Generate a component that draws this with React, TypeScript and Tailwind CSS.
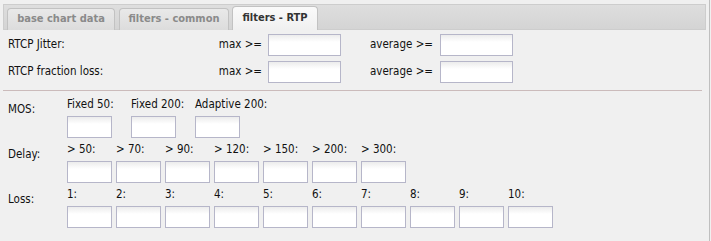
import React from "react";

const font = { fontFamily: '"DejaVu Sans Condensed", "DejaVu Sans", Verdana, sans-serif' };

function Input({ w }: { w: string }) {
  return (
    <div
      className={`${w} h-[22px] border border-[#b6b6c9] bg-[linear-gradient(#ececec,#ffffff_7px)]`}
    />
  );
}

function Section({
  label,
  items,
  gap,
}: {
  label: string;
  items: string[];
  gap: string;
}) {
  return (
    <div className="flex">
      <div className="w-[59px] pt-[5px] leading-[14px]">{label}</div>
      <div className={`flex ${gap}`}>
        {items.map((it) => (
          <div key={it} className="flex flex-col w-[45px]">
            <div className="leading-[14px] mb-[5px] whitespace-nowrap">{it}</div>
            <Input w="w-[45px]" />
          </div>
        ))}
      </div>
    </div>
  );
}

export default function App() {
  return (
    <div
      className="w-[711px] h-[241px] bg-[#f0f0f0] overflow-hidden text-[11.5px] text-[#111]"
      style={font}
    >
      <div className="w-[710px] h-full border-r border-[#bfbfbf]">
        <div className="pt-[4px] pl-[3px] pr-[3px]">
          <div className="h-[26px] border-t border-l border-r border-b border-[#cdcdcd] bg-[linear-gradient(#dedede,#d4d4d4)] flex items-end pl-[3px]">
            <div className="w-[108px] h-[22px] -mb-px border border-b-0 border-[#c2c2c2] rounded-t-[4px] bg-[linear-gradient(#e9e9e9,#dcdcdc)] flex items-center justify-center font-bold text-[11px] text-[#8a8a8a]">
              base chart data
            </div>
            <div className="ml-[4px] w-[110px] h-[22px] -mb-px border border-b-0 border-[#c2c2c2] rounded-t-[4px] bg-[linear-gradient(#e9e9e9,#dcdcdc)] flex items-center justify-center font-bold text-[11px] text-[#8a8a8a]">
              filters - common
            </div>
            <div className="ml-[3px] w-[86px] h-[24px] -mb-px border border-b-0 border-[#c2c2c2] rounded-t-[4px] bg-[linear-gradient(#fafafa,#f0f0f0)] flex items-center justify-center font-bold text-[11px] text-[#333]">
              filters - RTP
            </div>
          </div>
        </div>

        <div className="pl-[8px] pt-[4px]">
          <div className="flex items-center h-[22px]">
            <div className="w-[200px]">RTCP Jitter:</div>
            <div className="w-[54px] text-right">max &gt;=</div>
            <div className="ml-[6px]">
              <Input w="w-[73px]" />
            </div>
            <div className="w-[92px] text-right">average &gt;=</div>
            <div className="ml-[7px]">
              <Input w="w-[73px]" />
            </div>
          </div>
          <div className="flex items-center h-[22px] mt-[5px]">
            <div className="w-[200px]">RTCP fraction loss:</div>
            <div className="w-[54px] text-right">max &gt;=</div>
            <div className="ml-[6px]">
              <Input w="w-[73px]" />
            </div>
            <div className="w-[92px] text-right">average &gt;=</div>
            <div className="ml-[7px]">
              <Input w="w-[73px]" />
            </div>
          </div>

          <div className="mt-[7px] -ml-[5px] w-[699px] h-px bg-[#cbbbbb]" />

          <div className="mt-[6px]">
            <Section
              label="MOS:"
              items={["Fixed 50:", "Fixed 200:", "Adaptive 200:"]}
              gap="gap-[19px]"
            />
          </div>
          <div className="mt-[4px]">
            <Section
              label="Delay:"
              items={["> 50:", "> 70:", "> 90:", "> 120:", "> 150:", "> 200:", "> 300:"]}
              gap="gap-[4px]"
            />
          </div>
          <div className="mt-[4px]">
            <Section
              label="Loss:"
              items={["1:", "2:", "3:", "4:", "5:", "6:", "7:", "8:", "9:", "10:"]}
              gap="gap-[4px]"
            />
          </div>
        </div>
      </div>
    </div>
  );
}
